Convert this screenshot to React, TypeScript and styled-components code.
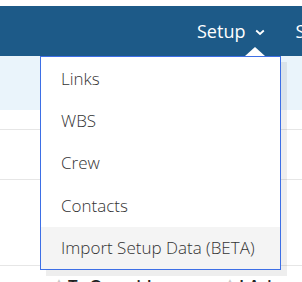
import React from "react";
import styled, { createGlobalStyle } from "styled-components";

const Global = createGlobalStyle`
  html, body { margin: 0; padding: 0; background: #ffffff; }
  body { font-family: "Open Sans", "Noto Sans", sans-serif; }
  * { box-sizing: border-box; }
`;

const Page = styled.div`
  position: relative;
  width: 302px;
  height: 282px;
  overflow: hidden;
  background: #ffffff;
  padding-top: 6px;
`;

const Header = styled.header`
  height: 50px;
  background: #1d5a88;
  display: flex;
  align-items: center;
  padding-left: 197px;
  white-space: nowrap;
`;

const NavItem = styled.div<{ $gap?: number }>`
  display: flex;
  align-items: center;
  color: #ffffff;
  font-size: 18px;
  line-height: 24px;
  margin-right: ${(p) => p.$gap ?? 0}px;
  flex-shrink: 0;
`;

const Chevron = styled.svg`
  margin-left: 10px;
  margin-top: 2px;
`;

const Band = styled.div`
  height: 54px;
  background: #eaf4fb;
`;

const Row = styled.div<{ $h: number }>`
  height: ${(p) => p.$h}px;
  border-bottom: 1px solid #e6e6e6;
`;

const ColHead = styled.div`
  display: flex;
  align-items: flex-start;
  padding-top: 8px;
  font-size: 17px;
  font-weight: 600;
  color: #222;
  white-space: nowrap;
`;

const HeadCell = styled.div<{ $left: number; $width: number }>`
  display: flex;
  align-items: flex-start;
  gap: 5px;
  margin-left: ${(p) => p.$left}px;
  width: ${(p) => p.$width}px;
  flex-shrink: 0;
`;

const SortIcon = styled.span`
  color: #c8c8c8;
  font-size: 8px;
  line-height: 8px;
  margin-top: 3px;
`;

const Menu = styled.ul`
  position: absolute;
  left: 40px;
  top: 56px;
  width: 241px;
  margin: 0;
  padding: 0;
  list-style: none;
  background: #ffffff;
  border: 1px solid #3d6fe6;
  box-shadow: 6px 6px 0 rgba(0, 0, 0, 0.065);
`;

const Caret = styled.div`
  position: absolute;
  left: 245px;
  top: 47px;
  width: 0;
  height: 0;
  border-left: 10px solid transparent;
  border-right: 10px solid transparent;
  border-bottom: 9px solid #ffffff;
`;

const MenuItem = styled.li<{ $active?: boolean }>`
  height: 42.4px;
  display: flex;
  align-items: center;
  padding-left: 20px;
  font-size: 17px;
  font-weight: 300;
  color: #333333;
  background: ${(p) => (p.$active ? "#f4f4f4" : "#ffffff")};
  white-space: nowrap;
`;

const items = ["Links", "WBS", "Crew", "Contacts", "Import Setup Data (BETA)"];

export default function App() {
  return (
    <>
      <Global />
      <Page>
        <Header>
          <NavItem $gap={30}>
            Setup
            <Chevron width="10" height="7" viewBox="0 0 10 7">
              <path d="M1.2 1.5 L5 5 L8.8 1.5" stroke="#fff" strokeWidth="1.8" fill="none" />
            </Chevron>
          </NavItem>
          <NavItem>Schedule</NavItem>
        </Header>
        <Band />
        <Row $h={20} />
        <Row $h={50} />
        <Row $h={86} />
        <ColHead>
          <HeadCell $left={55} $width={168}>
            <SortIcon>▲</SortIcon>
            <span>Tr Overrides</span>
          </HeadCell>
          <HeadCell $left={3} $width={80}>
            <SortIcon>▲</SortIcon>
            <span>I Ari</span>
          </HeadCell>
        </ColHead>
        <Caret />
        <Menu>
          {items.map((t, i) => (
            <MenuItem key={t} $active={i === items.length - 1}>
              {t}
            </MenuItem>
          ))}
        </Menu>
      </Page>
    </>
  );
}
